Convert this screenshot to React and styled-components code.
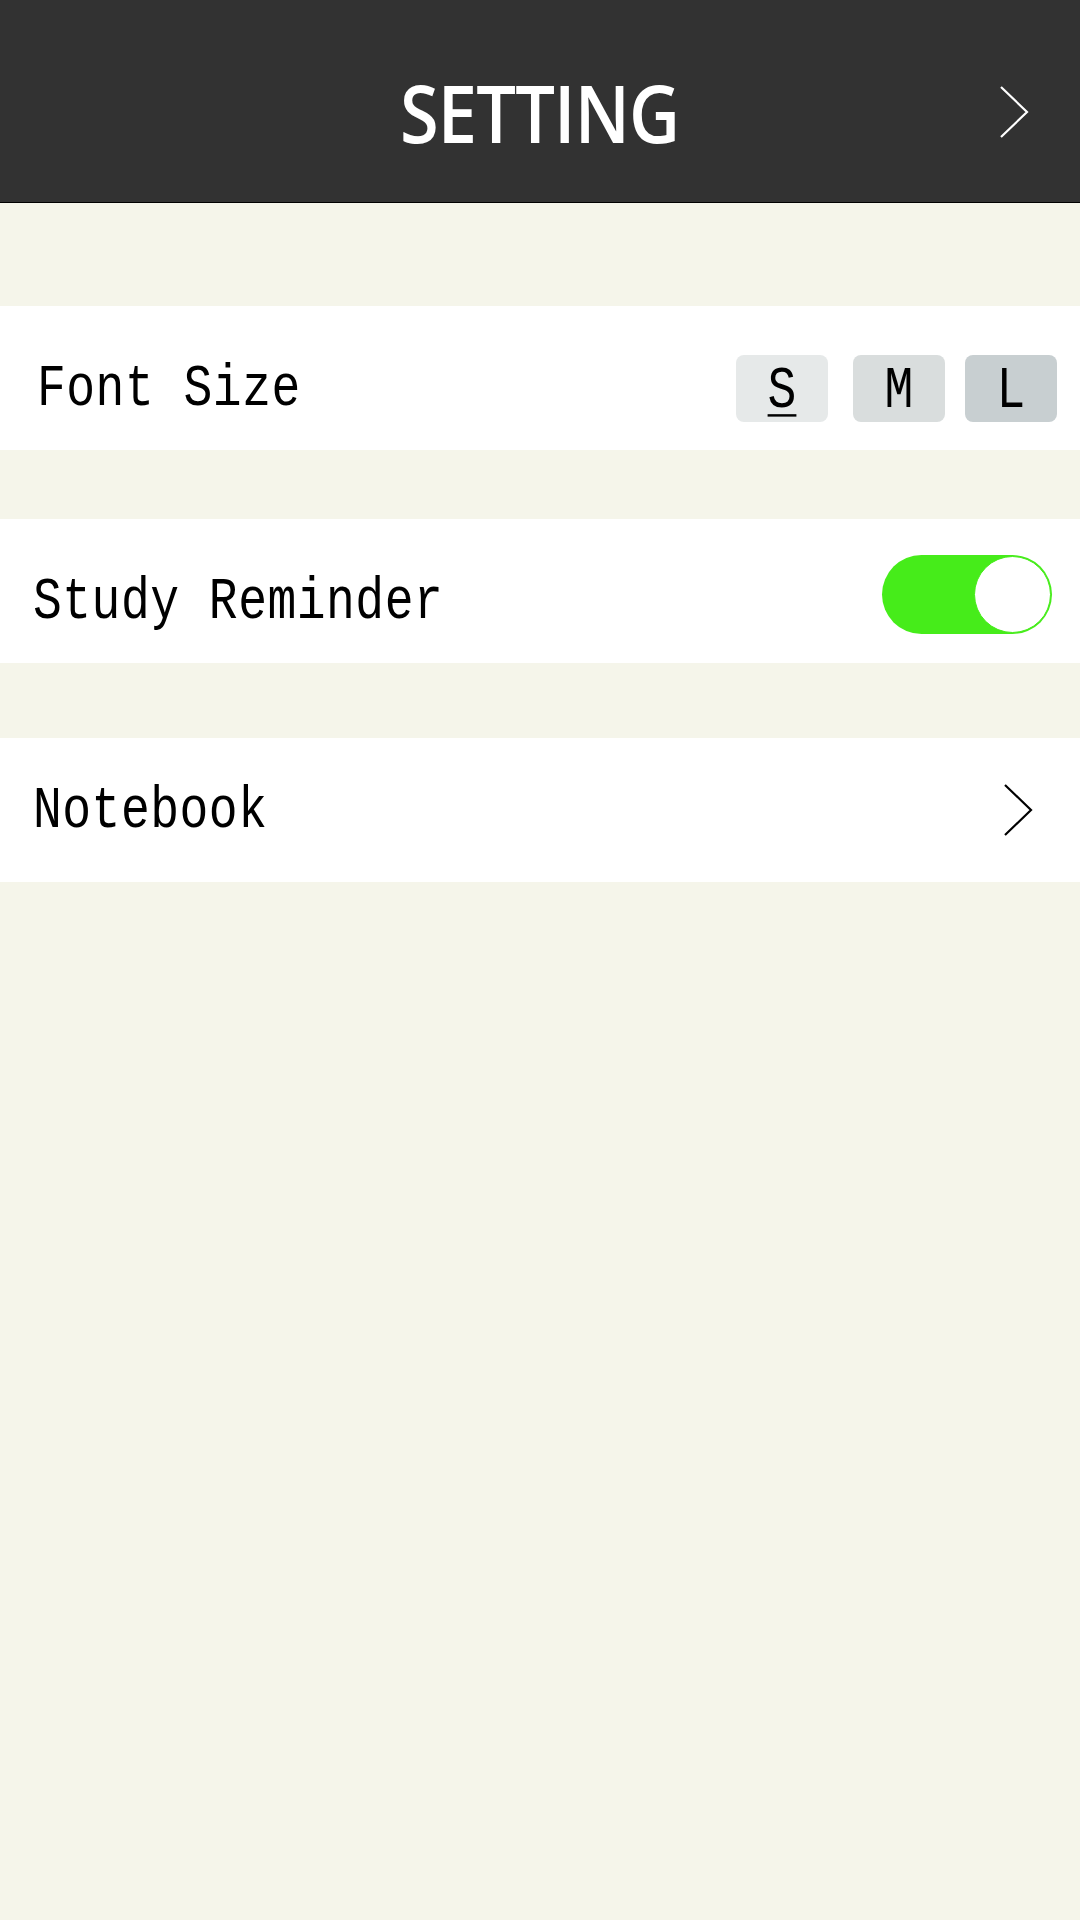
import React, { useState } from 'react';
import styled, { createGlobalStyle } from 'styled-components';

const GlobalStyle = createGlobalStyle`
  html, body {
    margin: 0;
    padding: 0;
    background: #f5f5ea;
  }
  * {
    box-sizing: border-box;
  }
`;

const Page = styled.div`
  width: 1080px;
  min-height: 1920px;
  background: #f5f5ea;
  display: flex;
  flex-direction: column;
`;

const Header = styled.header`
  height: 203px;
  background: #323232;
  border-bottom: 1px solid #000;
  padding-top: 22px;
  display: grid;
  grid-template-columns: 1fr auto 1fr;
  align-items: center;
`;

const Title = styled.h1`
  grid-column: 2;
  margin: 0;
  color: #fff;
  font-family: "Open Sans", "Noto Sans", sans-serif;
  font-weight: 600;
  font-size: 80px;
  line-height: 1;
  letter-spacing: -1px;
  transform: scaleX(0.88);
`;

const HeaderAction = styled.div`
  grid-column: 3;
  justify-self: end;
  margin-right: 51px;
  display: flex;
`;

const Gap = styled.div`
  height: ${({ $h }) => $h}px;
`;

const Row = styled.div`
  height: 144px;
  background: #fff;
  display: flex;
  align-items: center;
  justify-content: space-between;
  padding-left: ${({ $pl }) => $pl || 33}px;
  padding-right: ${({ $pr }) => $pr || 28}px;
`;

const Label = styled.span`
  font-family: "Liberation Mono", "DejaVu Sans Mono", monospace;
  font-size: 48px;
  line-height: 1;
  letter-spacing: 0.5px;
  color: #000;
  transform: translateY(${({ $shift }) => $shift || 0}px) scaleY(1.22);
`;

const SizeGroup = styled.div`
  display: flex;
  align-items: center;
  margin-top: 20px;
`;

const SizeButton = styled.button`
  width: 92px;
  height: 67px;
  margin-left: ${({ $ml }) => $ml || 0}px;
  border: none;
  border-radius: 8px;
  background: ${({ $bg }) => $bg};
  padding: 6px 0 0 0;
  display: flex;
  align-items: center;
  justify-content: center;
  cursor: pointer;

  span {
    font-family: "Liberation Mono", "DejaVu Sans Mono", monospace;
    font-size: 48px;
    line-height: 1;
    color: #000;
    transform: scaleY(1.22);
    text-decoration: ${({ $active }) => ($active ? 'underline' : 'none')};
    text-decoration-thickness: 2px;
    text-underline-offset: 6px;
  }
`;

const Track = styled.button`
  width: 170px;
  height: 79px;
  margin-top: 7px;
  border: none;
  border-radius: 40px;
  padding: 1px;
  background: ${({ $on }) => ($on ? '#46ec1a' : '#d6d6d6')};
  display: flex;
  justify-content: ${({ $on }) => ($on ? 'flex-end' : 'flex-start')};
  align-items: center;
  cursor: pointer;
`;

const Knob = styled.span`
  width: 77px;
  height: 77px;
  border-radius: 50%;
  background: #fff;
  border: 1px solid #46ec1a;
`;

const Chevron = ({ color }) => (
  <svg width="30" height="52" viewBox="0 0 30 52" fill="none">
    <polyline points="2,1 28,26 2,51" stroke={color} strokeWidth="2.2" />
  </svg>
);

const sizes = [
  { key: 'S', bg: '#e6e9e9', ml: 0 },
  { key: 'M', bg: '#d9dddd', ml: 25 },
  { key: 'L', bg: '#c8cfd1', ml: 20 },
];

const App = () => {
  const [size, setSize] = useState('S');
  const [remind, setRemind] = useState(true);

  return (
    <Page>
      <GlobalStyle />
      <Header>
        <Title>SETTING</Title>
        <HeaderAction>
          <Chevron color="#fff" />
        </HeaderAction>
      </Header>

      <Gap $h={103} />
      <Row $pl={37} $pr={23}>
        <Label $shift={11}>Font Size</Label>
        <SizeGroup>
          {sizes.map((s) => (
            <SizeButton
              key={s.key}
              $bg={s.bg}
              $ml={s.ml}
              $active={size === s.key}
              onClick={() => setSize(s.key)}
            >
              <span>{s.key}</span>
            </SizeButton>
          ))}
        </SizeGroup>
      </Row>

      <Gap $h={69} />
      <Row>
        <Label $shift={11}>Study Reminder</Label>
        <Track $on={remind} onClick={() => setRemind(!remind)}>
          <Knob />
        </Track>
      </Row>

      <Gap $h={75} />
      <Row $pr={47}>
        <Label $shift={1}>Notebook</Label>
        <Chevron color="#000" />
      </Row>
    </Page>
  );
};

export default App;
